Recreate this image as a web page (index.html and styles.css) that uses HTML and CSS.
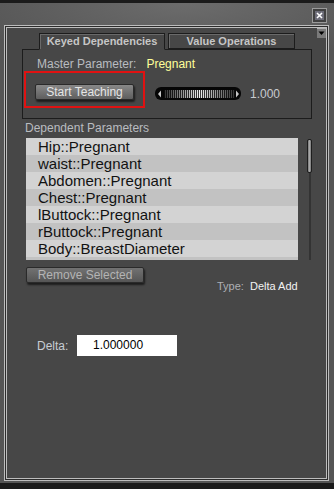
FILE: index.html
```html
<!DOCTYPE html>
<html lang="en">
<head>
    <meta charset="UTF-8">
    <title>Keyed Dependencies</title>
    <link rel="stylesheet" href="styles.css">
</head>
<body>
    <div class="window">
        <div class="titlebar">
            <div class="close-btn">
                <svg width="15" height="15" viewBox="0 0 15 15">
                    <rect x="0.5" y="0.5" width="14" height="14" fill="#404040" stroke="#9a9a9a"/>
                    <rect x="3" y="3" width="9" height="9" fill="#6c6c78"/>
                    <path d="M5 5 L10 10 M10 5 L5 10" stroke="#fff" stroke-width="1.6"/>
                </svg>
            </div>
        </div>

        <div class="frame">
            <div class="frame-inner">
                <div class="top-row">
                    <div class="tab-area">
                        <div class="tabs">
                            <div class="tab active">Keyed Dependencies</div>
                            <div class="tab">Value Operations</div>
                        </div>
                        <div class="tab-body">
                            <div class="master-row">
                                Master Parameter:<span class="master-name">Pregnant</span>
                            </div>
                            <div class="teach-row">
                                <div class="highlight-box">
                                    <div class="btn btn-teach">Start Teaching</div>
                                </div>
                                <div class="dial">
                                    <svg width="86" height="14" viewBox="0 0 86 14">
                                        <defs>
                                            <pattern id="ridge" width="2" height="9" patternUnits="userSpaceOnUse">
                                                <rect width="1" height="9" fill="#f0f0f0"/>
                                                <rect x="1" width="1" height="9" fill="#3a3a3a"/>
                                            </pattern>
                                            <linearGradient id="shade" x1="0" x2="1">
                                                <stop offset="0" stop-color="#000" stop-opacity="0.8"/>
                                                <stop offset="0.5" stop-color="#000" stop-opacity="0"/>
                                                <stop offset="1" stop-color="#000" stop-opacity="0.8"/>
                                            </linearGradient>
                                        </defs>
                                        <rect x="0" y="0" width="86" height="13" rx="6" fill="#060606"/>
                                        <rect x="9" y="3" width="71" height="8" fill="url(#ridge)"/>
                                        <rect x="9" y="3" width="71" height="8" fill="url(#shade)"/>
                                        <polygon points="6,3.5 3,7 6,10.5" fill="#c8c8c8"/>
                                        <polygon points="81,3.5 84,7 81,10.5" fill="#c8c8c8"/>
                                    </svg>
                                </div>
                                <div class="dial-value">1.000</div>
                            </div>
                        </div>
                    </div>
                    <div class="menu-arrow">
                        <svg width="9" height="10" viewBox="0 0 9 10">
                            <rect width="9" height="10" fill="#7a7a7a"/>
                            <rect width="9" height="1" fill="#b0b0b0"/>
                            <polygon points="1.5,3.5 7.5,3.5 4.5,7" fill="#000"/>
                        </svg>
                    </div>
                </div>

                <div class="deps">
                    <div class="deps-label">Dependent Parameters</div>
                    <div class="list-row">
                        <div class="dep-list">
                            <div class="dep-item">Hip::Pregnant</div>
                            <div class="dep-item">waist::Pregnant</div>
                            <div class="dep-item">Abdomen::Pregnant</div>
                            <div class="dep-item">Chest::Pregnant</div>
                            <div class="dep-item">lButtock::Pregnant</div>
                            <div class="dep-item">rButtock::Pregnant</div>
                            <div class="dep-item">Body::BreastDiameter</div>
                            <div class="dep-item">Body::BreastTone</div>
                        </div>
                        <div class="scrollbar">
                            <div class="scroll-thumb"></div>
                        </div>
                    </div>

                    <div class="remove-row">
                        <div class="btn btn-remove">Remove Selected</div>
                        <div class="type-info">
                            <span class="type-label">Type:</span>
                            <span class="type-value">Delta Add</span>
                        </div>
                    </div>

                    <div class="delta-row">
                        <span class="delta-label">Delta:</span>
                        <div class="delta-input">1.000000</div>
                    </div>
                </div>
            </div>
        </div>
    </div>
</body>
</html>
```

FILE: styles.css
```css
body {
    margin: 0;
    background: #1b1b1b;
    font-family: "Liberation Sans", Arial, sans-serif;
    font-size: 12px;
}
.window {
    height: 480px;
    margin-top: 3px;
    padding: 0 5px 0 4px;
    background: radial-gradient(ellipse 70% 60px at 55% 0, #6c6c6c, #555 100%);
    background-color: #525252;
}
.titlebar {
    height: 22px;
    display: flex;
    justify-content: flex-end;
}
.close-btn {
    width: 15px;
    height: 15px;
    margin: 5px 2px 0 0;
}
.close-btn svg {
    display: block;
}
.frame {
    height: 456px;
    box-sizing: border-box;
    border: 1px solid #bdbdbd;
    padding: 1px;
    background: #2c2c2c;
}
.frame-inner {
    height: 100%;
    box-sizing: border-box;
    border: 1px solid #bdbdbd;
    background: #474747;
}
.top-row {
    display: flex;
    align-items: flex-start;
}
.tab-area {
    width: 290px;
    margin: 5px 0 0 15px;
}
.tabs {
    display: flex;
    gap: 3px;
    padding-left: 17px;
    margin-bottom: -1px;
    position: relative;
}
.tab {
    height: 16px;
    box-sizing: border-box;
    border: 1px solid #1c1c1c;
    box-shadow: inset 1px 1px 0 #6a6a6a;
    background: #474747;
    color: #c6c6c6;
    font-size: 11px;
    font-weight: bold;
    line-height: 14px;
    text-align: center;
    width: 127px;
}
.tab.active {
    width: 126px;
    height: 17px;
    border-bottom-color: #474747;
}
.tab-body {
    border: 1px solid #1c1c1c;
    padding: 7px 0 10px 1px;
}
.master-row {
    padding-left: 13px;
    line-height: 14px;
    color: #b9bcc0;
}
.master-name {
    color: #ffff99;
    margin-left: 10px;
}
.teach-row {
    display: flex;
    align-items: flex-start;
}
.highlight-box {
    width: 121px;
    height: 37px;
    box-sizing: border-box;
    border: 2px solid #e01212;
    padding: 11px 0 0 9px;
}
.btn {
    height: 16px;
    box-sizing: border-box;
    border: 1px solid #2a2a2a;
    border-radius: 2px;
    text-align: center;
    line-height: 14px;
    font-size: 12px;
    box-shadow: 1px 2px 2px rgba(0, 0, 0, 0.6);
}
.btn-teach {
    width: 99px;
    background: linear-gradient(#888, #5e5e5e);
    color: #e6e6e6;
}
.dial {
    margin: 16px 0 0 10px;
    height: 14px;
}
.dial svg {
    display: block;
}
.dial-value {
    margin: 16px 0 0 9px;
    line-height: 14px;
    color: #c8cbd0;
}
.menu-arrow {
    margin-left: auto;
    width: 9px;
    height: 10px;
}
.menu-arrow svg {
    display: block;
}
.deps {
    padding-left: 18px;
}
.deps-label {
    margin-top: 2px;
    line-height: 14px;
    color: #b9bcc0;
}
.list-row {
    display: flex;
    margin: 3px 0 0 1px;
}
.dep-list {
    width: 272px;
    height: 122px;
    overflow: hidden;
}
.dep-item {
    height: 17px;
    padding-left: 12px;
    font-size: 15px;
    line-height: 17px;
    color: #121212;
    background: #d3d3d3;
}
.dep-item:nth-child(even) {
    background: #c2c2c2;
}
.scrollbar {
    width: 5px;
    height: 121px;
    margin: 1px 0 0 9px;
    background: linear-gradient(90deg, transparent 2px, #333 2px, #333 4px, transparent 4px);
}
.scroll-thumb {
    height: 34px;
    box-sizing: border-box;
    border: 1px solid #1e1e1e;
    border-radius: 2px;
    background: linear-gradient(90deg, #7a7a7a, #a8a8a8 50%, #7a7a7a);
}
.remove-row {
    display: flex;
    align-items: flex-start;
    margin: 7px 0 0 1px;
}
.btn-remove {
    width: 118px;
    background: linear-gradient(#727272, #555);
    color: #b4b4b4;
}
.type-info {
    margin: 13px 0 0 73px;
    font-size: 11px;
    line-height: 13px;
}
.type-label {
    color: #aeb0b4;
    margin-right: 3px;
}
.type-value {
    color: #f2f2f2;
}
.delta-row {
    display: flex;
    align-items: center;
    margin: 42px 0 0 12px;
}
.delta-label {
    width: 40px;
    color: #c8cdd4;
    line-height: 14px;
}
.delta-input {
    width: 100px;
    height: 21px;
    box-sizing: border-box;
    padding-left: 16px;
    background: #fff;
    color: #000;
    line-height: 21px;
}
```
